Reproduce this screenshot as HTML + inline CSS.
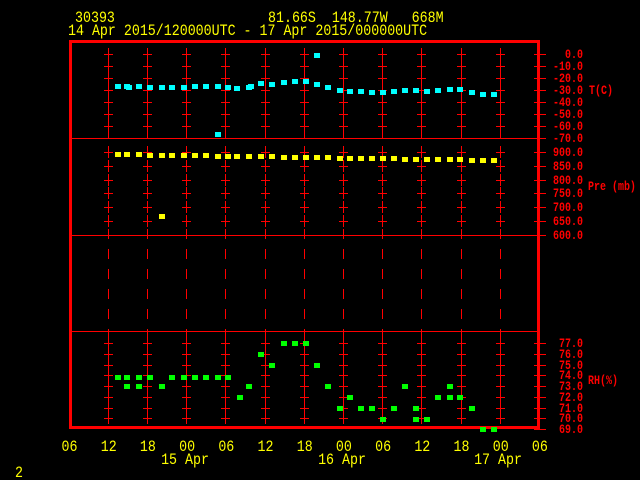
<!DOCTYPE html>
<html><head><meta charset="utf-8"><style>
html,body{margin:0;padding:0;background:#000;width:640px;height:480px;overflow:hidden}
svg{display:block}
text{font-family:"Liberation Mono","DejaVu Sans Mono",monospace;white-space:pre}
rect{shape-rendering:crispEdges}
</style></head><body>
<svg id="s" width="640" height="480" viewBox="0 0 640 480" xmlns="http://www.w3.org/2000/svg" xml:space="preserve">
<g fill="#ffff00" font-size="13.3">
<text transform="translate(75,22) scale(1,1.2)">30393</text>
<text transform="translate(268,22) scale(1,1.2)">81.66S  148.77W   668M</text>
<text transform="translate(68,35) scale(1,1.2)">14 Apr 2015/120000UTC - 17 Apr 2015/000000UTC</text>
<text transform="translate(15,477) scale(1,1.2)">2</text>
</g>
<g id="g"></g>
</svg>
<script>
var g=document.getElementById('g'),h='';
function V(x,y1,y2){h+='<rect x="'+x+'" y="'+y1+'" width="1" height="'+(y2-y1)+'" fill="#ff0000"/>';}
function H(x1,x2,y,w){h+='<rect x="'+x1+'" y="'+y+'" width="'+(x2-x1)+'" height="'+(w||1)+'" fill="#ff0000"/>';}
function T(x,y,s,c,a,fs,sy,b){h+='<text transform="translate('+x+','+y+') scale(1,'+sy+')" font-size="'+fs+'" fill="'+c+'"'+(b?' font-weight="bold"':'')+(a?' text-anchor="'+a+'"':'')+'>'+s+'</text>';}
function R(x,y,c){h+='<rect x="'+(x-3)+'" y="'+(y-2)+'" width="6" height="5" fill="'+c+'"/>';}
var xs=[];for(var i=0;i<13;i++)xs.push(69.5+i*39.2);
var tT=[],tP=[],tR=[];
for(var i=0;i<=7;i++)tT.push(54+i*12);
for(var i=0;i<=6;i++)tP.push(Math.round(152+i*13.83));
for(var i=0;i<=8;i++)tR.push(Math.round(343+i*10.75));
for(var i=1;i<12;i++){var x=Math.round(xs[i])-1;
 tT.slice(0,7).forEach(function(y){V(x,y-6,y+6);H(x-4,x+5,y);});
 V(x,128,139);
 tP.slice(0,6).forEach(function(y){V(x,y-6,y+6);H(x-4,x+5,y);});
 for(var y=229;y<331;y+=20)V(x,y,y+10);
 V(x,331,338);
 tR.slice(0,8).forEach(function(y){V(x,y-5,y+6);H(x-4,x+5,y);});
}
H(70,538,138);H(70,538,235);H(70,538,331);
H(69,540,40,3);H(69,540,426,3);V(69,40,429);V(70,40,429);V(71,40,429);V(537,40,429);V(538,40,429);V(539,40,429);
var tl=['0.0','-10.0','-20.0','-30.0','-40.0','-50.0','-60.0','-70.0'];
tT.forEach(function(y,i){H(534,546,y);T(583,y+4,tl[i],'#ff0000','end',10,1.3,1);});
var pl=['900.0','850.0','800.0','750.0','700.0','650.0','600.0'];
tP.forEach(function(y,i){H(534,546,y);T(583,y+4,pl[i],'#ff0000','end',10,1.3,1);});
var rl=['77.0','76.0','75.0','74.0','73.0','72.0','71.0','70.0','69.0'];
tR.forEach(function(y,i){H(534,546,y);T(583,y+4,rl[i],'#ff0000','end',10,1.3,1);});
T(589,94,'T(C)','#ff0000','',10,1.3,1);T(588,190,'Pre (mb)','#ff0000','',10,1.3,1);T(588,384,'RH(%)','#ff0000','',10,1.3,1);
var xl=['06','12','18','00','06','12','18','00','06','12','18','00','06'];
xs.forEach(function(x,i){T(x,451,xl[i],'#ffff00','middle',13.3,1.2);});
T(185,464,'15 Apr','#ffff00','middle',13.3,1.2);T(342,464,'16 Apr','#ffff00','middle',13.3,1.2);T(498,464,'17 Apr','#ffff00','middle',13.3,1.2);
var tc=[[118,86],[127,86],[129,87],[139,86],[150,87],[162,87],[172,87],[184,87],[195,86],[206,86],[218,86],[228,87],[237,88],[249,87],[251,86],[261,83],[272,84],[284,82],[295,81],[306,81],[317,84],[328,87],[340,90],[350,91],[361,91],[372,92],[383,92],[394,91],[405,90],[416,90],[427,91],[438,90],[450,89],[460,89],[472,92],[483,94],[494,94],[218,134],[317,55]];
tc.forEach(function(p){R(p[0],p[1],'#00ffff');});
var px=[118,127,139,150,162,172,184,195,206,218,228,237,249,261,272,284,295,306,317,328,340,350,361,372,383,394,405,416,427,438,450,460,472,483,494];
px.forEach(function(x,i){R(x,154+Math.round(6*i/34),'#ffff00');});
R(162,216,'#ffff00');
var rh=[[118,377],[127,377],[139,377],[150,377],[127,386],[139,386],[162,386],[172,377],[184,377],[195,377],[206,377],[218,377],[228,377],[240,397],[249,386],[261,354],[272,365],[284,343],[295,343],[306,343],[317,365],[328,386],[340,408],[350,397],[361,408],[372,408],[383,419],[394,408],[405,386],[416,408],[416,419],[427,419],[438,397],[450,386],[450,397],[460,397],[472,408],[483,429],[494,429]];
rh.forEach(function(p){R(p[0],p[1],'#00ff00');});
g.innerHTML=h;
</script>
</body></html>
